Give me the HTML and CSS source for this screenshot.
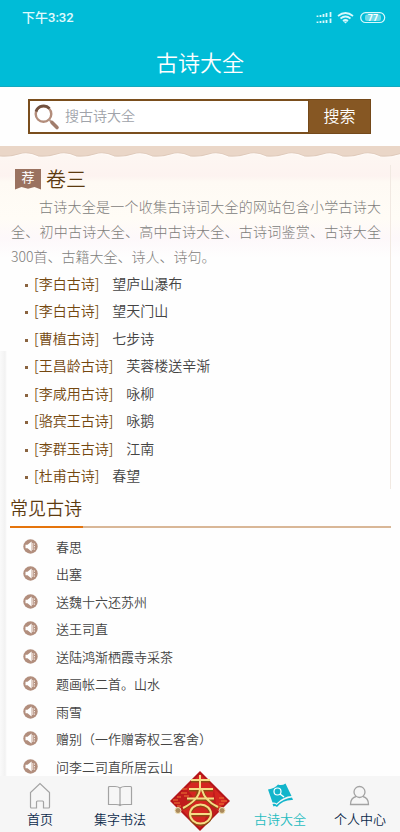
FILE: index.html
```html
<!DOCTYPE html>
<html lang="zh-CN">
<head>
    <meta charset="UTF-8">
    <meta name="viewport" content="width=device-width, initial-scale=1.0">
    <title>古诗大全</title>
    <link rel="stylesheet" href="styles.css">
</head>
<body>
    <!-- Shared icons -->
    <svg class="sprite" aria-hidden="true">
        <symbol id="speaker" viewBox="0 0 15 15">
            <circle cx="7.5" cy="7.5" r="7.2" fill="#b28e7d"/>
            <path d="M2.5 5.7h2L8.6 2.6v9.8L4.5 9.3h-2z" fill="#fff"/>
            <path d="M9.8 4v7M11.5 4.5v1.3M11.5 7v1.3M11.5 9.5v1.2" fill="none" stroke="#f2e7e0" stroke-width="1"/>
        </symbol>
    </svg>

    <header class="header">
        <div class="status">
            <span class="time">下午3:32</span>
            <svg class="signal" width="70" height="14" viewBox="0 0 70 14" fill="none" stroke="#d8f8fc">
                <path d="M1.500 6V4.500M4.500 6V4M7.500 6V3M10.500 6V2M14.500 6V1" stroke-width="1.800"/>
                <path d="M1.500 12v-1.500M4.500 12v-2M7.500 12V9.500M10.500 12V9M14.500 12V7.500" stroke-width="1.800"/>
                <path d="M22 5q7.500-6 15 0M24.500 7.500q5-4 10 0M27 10q2.500-2 5 0" stroke-width="1.700"/>
                <path d="M27.500 10.500L29.500 12.500L31.500 10.500z" fill="#d8f8fc" stroke="none"/>
                <rect x="44.700" y="1.700" width="24" height="9.800" rx="4.900" stroke-width="1.200"/>
                <rect x="49" y="3.500" width="16" height="6.500" rx="2" fill="#6fdae8" stroke="none"/>
                <text class="charge" x="57" y="10" text-anchor="middle">77</text>
            </svg>
        </div>
        <h1 class="title">古诗大全</h1>
    </header>

    <form class="search">
        <label class="field">
            <svg width="28" height="28" viewBox="0 0 28 28" fill="none">
                <circle cx="10.500" cy="11" r="7.800" stroke="#b38d7b" stroke-width="2.400"/>
                <path d="M3 8.500A8 8 0 0 1 16.500 5.500" stroke="#71513f" stroke-width="2.800"/>
                <path d="M16 16.500l3 3" stroke="#b99a8b" stroke-width="2"/>
                <path d="M19 19.500l5 5" stroke="#a17d6c" stroke-width="3.600" stroke-linecap="round"/>
            </svg>
            <input type="text" placeholder="搜古诗大全" aria-label="搜古诗大全">
        </label>
        <button type="button">搜索</button>
    </form>

    <main class="content">
        <section class="featured">
            <svg class="wave" height="16" aria-hidden="true">
                <defs>
                    <pattern id="scallop" width="38" height="16" patternUnits="userSpaceOnUse">
                        <path d="M0 0h38v11Q28 6 19 9T0 11z" fill="#ead6c7"/>
                        <path d="M0 10Q10 11 19 8T38 10" fill="none" stroke="#dfcabb" stroke-width="1"/>
                        <path d="M0 11Q10 12 19 9T38 11" fill="none" stroke="#fffaf7" stroke-width="1.200"/>
                    </pattern>
                </defs>
                <rect width="100%" height="16" fill="url(#scallop)"/>
            </svg>
            <div class="featured-body">
                <h2 class="volume"><span class="ribbon">荐</span>卷三</h2>
                <p class="intro">古诗大全是一个收集古诗词大全的网站包含小学古诗大全、初中古诗大全、高中古诗大全、古诗词鉴赏、古诗大全300首、古籍大全、诗人、诗句。</p>
                <ul class="poems">
                    <li><a class="poet" href="#">[李白古诗]</a><a href="#">望庐山瀑布</a></li>
                    <li><a class="poet" href="#">[李白古诗]</a><a href="#">望天门山</a></li>
                    <li><a class="poet" href="#">[曹植古诗]</a><a href="#">七步诗</a></li>
                    <li><a class="poet" href="#">[王昌龄古诗]</a><a href="#">芙蓉楼送辛渐</a></li>
                    <li><a class="poet" href="#">[李咸用古诗]</a><a href="#">咏柳</a></li>
                    <li><a class="poet" href="#">[骆宾王古诗]</a><a href="#">咏鹅</a></li>
                    <li><a class="poet" href="#">[李群玉古诗]</a><a href="#">江南</a></li>
                    <li><a class="poet" href="#">[杜甫古诗]</a><a href="#">春望</a></li>
                </ul>
            </div>
        </section>

        <section class="common">
            <h2 class="common-title"><span>常见古诗</span></h2>
            <ul class="listen">
                <li><svg><use href="#speaker"/></svg><a href="#">春思</a></li>
                <li><svg><use href="#speaker"/></svg><a href="#">出塞</a></li>
                <li><svg><use href="#speaker"/></svg><a href="#">送魏十六还苏州</a></li>
                <li><svg><use href="#speaker"/></svg><a href="#">送王司直</a></li>
                <li><svg><use href="#speaker"/></svg><a href="#">送陆鸿渐栖霞寺采茶</a></li>
                <li><svg><use href="#speaker"/></svg><a href="#">题画帐二首。山水</a></li>
                <li><svg><use href="#speaker"/></svg><a href="#">雨雪</a></li>
                <li><svg><use href="#speaker"/></svg><a href="#">赠别（一作赠寄权三客舍）</a></li>
                <li><svg><use href="#speaker"/></svg><a href="#">问李二司直所居云山</a></li>
            </ul>
        </section>
    </main>

    <nav class="tabs">
        <a href="#">
            <svg width="28" height="28" viewBox="0 0 28 28" fill="none" stroke="#a3a3a3" stroke-width="1.200">
                <path d="M5.500 26Q4.500 26 4.500 25V10.500L14 1.500L23.500 10.500V25Q23.500 26 22.500 26H17.500V20Q17.500 19 16.500 19H11.500Q10.500 19 10.500 20V26z"/>
            </svg>
            首页
        </a>
        <a href="#">
            <svg width="28" height="28" viewBox="0 0 28 28" fill="none" stroke="#a3a3a3" stroke-width="1.200">
                <path d="M14 6Q12 4.500 9 4.500H3.500Q2.500 4.500 2.500 5.500V22.500H10Q13 22.500 14 23.500Q15 22.500 18 22.500H25.500V5.500Q25.500 4.500 24.500 4.500H19Q16 4.500 14 6zM14 6V23"/>
            </svg>
            集字书法
        </a>
        <a class="spring" href="#" aria-label="春">
            <svg width="62" height="62" viewBox="0 0 62 62">
                <path d="M31 1L61 31L31 61L1 31z" fill="#b5161a"/>
                <path d="M31 4L58 31L31 58L4 31z" fill="#d42620"/>
                <path d="M31 4L17 18l8 10L13 40L4 31z" fill="#bf1b1c"/>
                <path d="M45 18l3 24L31 58l4-6L43 30z" fill="#c01c1d"/>
                <g fill="none" stroke="#ee7a35" stroke-width="1.200">
                    <path d="M4 30h5M5 33h6M8 27h4M8 36h4M13 19h5M12 23h6M15 26h5M50 28h5M52 31h6M50 34h5M48 37h4"/>
                </g>
                <g fill="none" stroke="#8c4c12" stroke-width="3">
                    <path d="M22 11H41M20 20H44M18 29.500H45M29.500 21Q27 32 14 39M34 22Q37 32 49 38"/>
                    <ellipse cx="31.500" cy="45" rx="10.500" ry="9.500"/>
                    <path d="M22 45H41"/>
                </g>
                <g fill="none" stroke="#f6dc86" stroke-width="2">
                    <path d="M22 10H41M20 19H44M18 28.500H45M31 5V19Q30 30 14 38M33 20Q36 31 49 37"/>
                    <ellipse cx="31.500" cy="44" rx="10.500" ry="9.500"/>
                    <path d="M22 44H41"/>
                </g>
                <g fill="#ab8a5b" stroke="#efe0b4">
                    <circle cx="9" cy="40.500" r="3"/>
                    <circle cx="53" cy="40.500" r="3"/>
                </g>
            </svg>
        </a>
        <a class="active" href="#">
            <svg width="28" height="28" viewBox="0 0 28 28" fill="none">
                <path d="M2 7.500Q9 6.500 12 2.500Q16 4 19.500 1.500L25.500 14Q18 14 10.500 21.500Q9 20 6.500 20.500z" fill="#12b5cb"/>
                <path d="M6.500 22Q9 21 10.500 23Q18 16 26 15.500L27 18Q17 17.500 11 25Q9 23.500 7.500 24.500z" fill="#12b5cb"/>
                <circle cx="11.500" cy="9.500" r="3.500" stroke="#fff" stroke-width="1.200"/>
                <path d="M14 12l4 3" stroke="#fff" stroke-width="1.500"/>
            </svg>
            古诗大全
        </a>
        <a href="#">
            <svg width="28" height="28" viewBox="0 0 28 28" fill="none" stroke="#a3a3a3" stroke-width="1.300">
                <circle cx="13.500" cy="10" r="5.500"/>
                <path d="M10 14.500Q4.500 16 4.500 22.500H22.500Q22.500 16 17 14.500"/>
            </svg>
            个人中心
        </a>
    </nav>
</body>
</html>
```

FILE: styles.css
```css
* {
    box-sizing: border-box;
}

body {
    margin: 0;
    height: 100vh;
    display: flex;
    flex-direction: column;
    overflow: hidden;
    background: #fefefe;
    color: #444;
    font-family: "Noto Sans CJK SC", sans-serif;
    font-size: 14px;
    font-weight: 350;
}

a {
    color: inherit;
    text-decoration: none;
}

h1, h2, p, ul {
    margin: 0;
    padding: 0;
    font-weight: 350;
}

ul {
    list-style: none;
}

.sprite {
    display: none;
}

/* Top bar */
.header {
    flex: none;
    background: #00bcd7;
    color: #fff;
    border-bottom: 1px solid #14a9bf;
}

.status {
    display: flex;
    justify-content: space-between;
    align-items: center;
    height: 36px;
    padding: 0 14px 0 22px;
}

.time {
    font-family: Roboto, "Noto Sans CJK SC", sans-serif;
    font-size: 13px;
    font-weight: 500;
    line-height: 16px;
    color: #e0fafd;
}

.charge {
    fill: #fff;
    stroke: none;
    font-family: Roboto, sans-serif;
    font-size: 9px;
    font-weight: bold;
}

.title {
    font-size: 22px;
    line-height: 50px;
    text-align: center;
}

/* Search */
.search {
    flex: none;
    display: flex;
    margin: 12px 29px 12px 28px;
    height: 35px;
}

.field {
    flex: 1;
    display: flex;
    align-items: center;
    min-width: 0;
    padding-left: 3px;
    border: 2px solid #7a4e1d;
    border-right: 0;
    background: #fff;
}

.field input {
    flex: 1;
    min-width: 0;
    padding: 0 4px 3px 4px;
    border: 0;
    outline: none;
    background: none;
    font: inherit;
}

.field input::placeholder {
    color: #a0a3aa;
}

.search button {
    width: 63px;
    padding: 0 0 3px;
    border: 1px solid #74491a;
    background: #865723;
    color: #fff;
    font: inherit;
    font-size: 16px;
}

/* soft shade down the left edge of the lower part */
.content {
    flex: 1;
    min-height: 0;
    overflow: hidden;
    background: linear-gradient(90deg, #fafafa, #f2f2f2 5px, #fefefe) 0 205px / 7px 100% no-repeat;
}

/* Recommended volume */
.featured {
    background: linear-gradient(#fdf8f3, #fdf3f0 30px, #fefaf4 36px, #fffcf6 72px, #fdf8fa 92px, #fefefe00 112px);
}

.wave {
    display: block;
    width: 100%;
}

.featured-body {
    margin: 3px 9px 0 0;
    padding-left: 11px;
    border-right: 1px solid #f1e9e2;
}

.volume {
    display: flex;
    align-items: center;
    gap: 5px;
    padding-left: 4px;
    font-size: 20px;
    line-height: 28px;
    color: #5c3a10;
}

.ribbon {
    width: 26px;
    height: 21px;
    background: #9a7260;
    clip-path: polygon(0 0, 100% 0, 100% 100%, 75% 88%, 50% 96%, 25% 88%, 0 100%);
    color: #fff;
    font-size: 13px;
    font-weight: 400;
    line-height: 16px;
    text-align: center;
}

.intro {
    padding: 1px 9px 1px 0;
    line-height: 25px;
    font-weight: 300;
    text-indent: 2em;
    text-align: justify;
    color: #807d7b;
}

.poems {
    padding-left: 14px;
}

.poems li {
    display: flex;
    align-items: center;
    line-height: 27px;
}

.poems li:nth-child(even),
.listen li:nth-child(even) {
    margin-bottom: 1px;
}

.poems li::before {
    content: "";
    width: 3px;
    height: 3px;
    margin: 3px 6px 0 0;
    background: #8a6440;
}

.poet {
    margin-right: 13px;
    color: #74480f;
}

/* Common poems */
.common {
    padding: 2px 9px 0 10px;
}

.common-title {
    display: flex;
    border-bottom: 2px solid #d9b797;
    font-size: 18px;
    line-height: 30px;
    color: #5c3a10;
}

.common-title span {
    margin-bottom: -2px;
    padding: 0 1px 4px 0;
    border-bottom: 2px solid #e5740c;
}

.listen {
    padding: 5px 0 0 13px;
    font-size: 13px;
}

.listen li {
    display: flex;
    align-items: center;
    gap: 18px;
    line-height: 27px;
}

.listen svg {
    width: 15px;
    height: 15px;
}

/* Bottom tabs */
.tabs {
    flex: none;
    display: grid;
    grid-template-columns: repeat(5, 1fr);
    grid-template-rows: 100%;
    height: 56px;
    background: #f6f6f6;
    color: #0d2b4b;
    font-size: 13px;
}

.tabs a {
    display: flex;
    flex-direction: column;
    align-items: center;
    padding-top: 6px;
    line-height: 18px;
}

.tabs svg {
    flex: none;
}

/* the festive badge rises above the bar */
.tabs .spring {
    justify-content: flex-end;
    padding: 0;
}

.tabs .active {
    color: #1fbcc0;
}
```
